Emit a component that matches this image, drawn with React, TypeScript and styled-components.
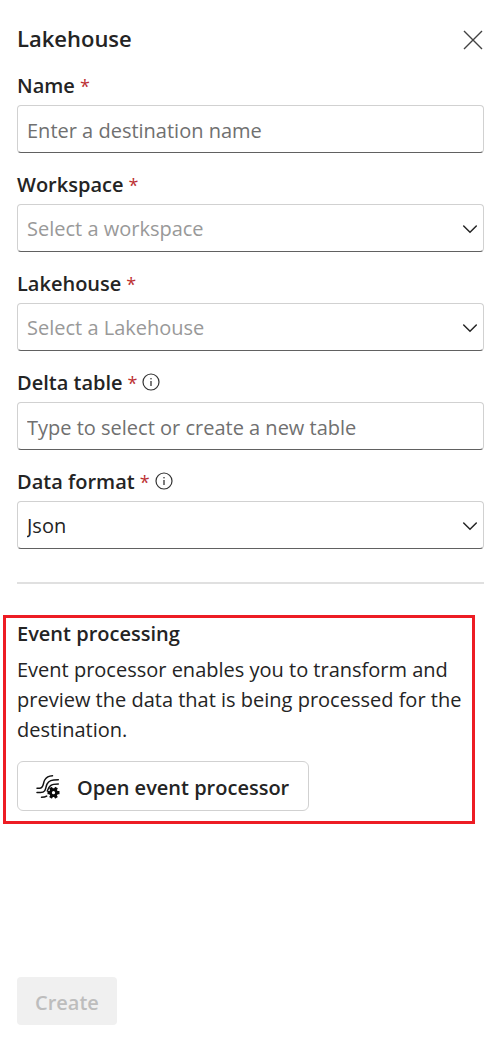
import React from "react";
import styled, { createGlobalStyle, css } from "styled-components";

const GlobalStyle = createGlobalStyle`
  *, *::before, *::after { box-sizing: border-box; }
  body {
    margin: 0;
    background: #ffffff;
    color: #242424;
    font-family: "Open Sans", "Noto Sans", sans-serif;
    font-size: 20px;
    line-height: 30px;
  }
  button, input, select { font: inherit; color: inherit; }
`;

const Panel = styled.form`
  display: flex;
  flex-direction: column;
  min-height: 100vh;
  padding: 24px 16px 20px 17px;
`;

const Header = styled.header`
  display: flex;
  align-items: flex-end;
  justify-content: space-between;
  height: 30px;
  margin-bottom: 17px;
`;

const Title = styled.h1`
  margin: 0;
  padding-bottom: 1px;
  font-size: 22px;
  font-weight: 600;
`;

const IconButton = styled.button`
  display: flex;
  padding: 0 0 3px;
  border: 0;
  background: none;
  cursor: pointer;
`;

const Fields = styled.div`
  display: flex;
  flex-direction: column;
  gap: 17px;
`;

const Field = styled.div`
  display: flex;
  flex-direction: column;
  gap: 4px;
`;

const LabelRow = styled.div`
  display: flex;
  align-items: center;
  gap: 5px;
  height: 30px;
`;

const Label = styled.label`
  font-weight: 600;
`;

const Required = styled.span`
  margin-left: 5px;
  color: #bc2f32;
  font-size: 18px;
  font-weight: 400;
  line-height: 20px;
`;

const controlStyle = css`
  width: 100%;
  height: 48px;
  padding: 2px 9px 0;
  border: 1px solid #d1d1d1;
  border-bottom-color: #616161;
  border-radius: 4px;
  background: #ffffff;
`;

const TextInput = styled.input`
  ${controlStyle}
  &::placeholder { color: #707070; opacity: 1; }
`;

const SelectBox = styled.div`
  position: relative;
`;

const Select = styled.select<{ $empty: boolean }>`
  ${controlStyle}
  display: block;
  padding-right: 36px;
  appearance: none;
  color: ${(p) => (p.$empty ? "#999999" : "#242424")};
`;

const Chevron = styled.svg`
  position: absolute;
  right: 6px;
  top: 16px;
  pointer-events: none;
`;

const Divider = styled.hr`
  width: 100%;
  height: 2px;
  margin: 33px 0 31px;
  border: 0;
  background: #e0e0e0;
`;

const Highlight = styled.section`
  margin: 0 9px 40px -14px;
  padding: 1px 3px 10px 11px;
  border: 3px solid #ed1c24;
`;

const SectionTitle = styled.h2`
  margin: 0 0 6px;
  font-size: 20px;
  font-weight: 600;
`;

const Description = styled.p`
  margin: 0 0 16px;
`;

const OutlineButton = styled.button`
  display: flex;
  align-items: center;
  gap: 16px;
  height: 50px;
  padding: 3px 19px 0 17px;
  border: 1px solid #d1d1d1;
  border-radius: 6px;
  background: #ffffff;
  font-weight: 600;
  cursor: pointer;
`;

const CreateButton = styled.button`
  align-self: flex-start;
  height: 48px;
  margin-top: auto;
  padding: 3px 18px 0;
  border: 0;
  border-radius: 4px;
  background: #f0f0f0;
  font-weight: 600;

  &:disabled { color: #bdbdbd; }
`;

const CloseIcon = () => (
  <svg width="22" height="22" viewBox="0 0 22 22" fill="none" stroke="#424242" strokeWidth="1.4" aria-hidden="true">
    <path d="M2 2 20 20M20 2 2 20" />
  </svg>
);

const InfoIcon = () => (
  <svg width="18" height="18" viewBox="0 0 18 18" fill="none" stroke="#333333" aria-hidden="true">
    <circle cx="9" cy="9" r="8" strokeWidth="1.2" />
    <path d="M9 8v5" strokeWidth="1.3" />
    <circle cx="9" cy="5.7" r="0.8" fill="#333333" stroke="none" />
  </svg>
);

const ProcessorIcon = () => (
  <svg width="26" height="26" viewBox="0 0 26 26" fill="none" aria-hidden="true">
    <g stroke="#111111" strokeWidth="1.5" strokeLinecap="round">
      <path d="M2 13.300h2.500c4.500 0 3.300-5 5.200-8.300C11.500 1.900 13.500 1 17.500.8" />
      <path d="M2 17.500h3.500c6 0 4.800-5 6.500-8.400 1.800-3.500 4.500-4.300 11.300-4.300" />
      <path d="M6.500 22.300c2.300 0 3.800-.3 5.200-1.200" />
      <path d="M12.300 16c1.800-5 3.200-7 11-7" />
    </g>
    <g fill="#0a0a0a">
      <circle cx="18.500" cy="17.700" r="4.400" />
      {[0, 60, 120].map((angle) => (
        <rect key={angle} x="12.500" y="16.100" width="12" height="3.200" rx="0.5" transform={`rotate(${angle} 18.500 17.700)`} />
      ))}
    </g>
    <circle cx="18.500" cy="17.700" r="1.600" fill="#ffffff" />
  </svg>
);

type FieldProps = {
  id: string;
  label: string;
  info?: string;
  children: React.ReactNode;
};

const FormField = ({ id, label, info, children }: FieldProps) => (
  <Field>
    <LabelRow>
      <Label htmlFor={id}>
        {label}
        <Required>*</Required>
      </Label>
      {info && (
        <IconButton type="button" aria-label={info}>
          <InfoIcon />
        </IconButton>
      )}
    </LabelRow>
    {children}
  </Field>
);

type DropdownProps = { id: string; text: string; empty?: boolean };

const Dropdown = ({ id, text, empty = false }: DropdownProps) => (
  <SelectBox>
    <Select id={id} $empty={empty} defaultValue={empty ? "" : text}>
      <option value={empty ? "" : text}>{text}</option>
    </Select>
    <Chevron width="16" height="16" viewBox="0 0 16 16" fill="none" stroke="#242424" strokeWidth="1.5" strokeLinecap="round" aria-hidden="true">
      <path d="M1.700 6 8 12.200 14.300 6" />
    </Chevron>
  </SelectBox>
);

export default function App() {
  return (
    <>
      <GlobalStyle />
      <Panel onSubmit={(e) => e.preventDefault()}>
        <Header>
          <Title>Lakehouse</Title>
          <IconButton type="button" aria-label="Close">
            <CloseIcon />
          </IconButton>
        </Header>
        <Fields>
          <FormField id="name" label="Name">
            <TextInput id="name" placeholder="Enter a destination name" />
          </FormField>
          <FormField id="workspace" label="Workspace">
            <Dropdown id="workspace" text="Select a workspace" empty />
          </FormField>
          <FormField id="lakehouse" label="Lakehouse">
            <Dropdown id="lakehouse" text="Select a Lakehouse" empty />
          </FormField>
          <FormField id="table" label="Delta table" info="About the delta table">
            <TextInput id="table" placeholder="Type to select or create a new table" />
          </FormField>
          <FormField id="format" label="Data format" info="About the data format">
            <Dropdown id="format" text="Json" />
          </FormField>
        </Fields>
        <Divider />
        <Highlight>
          <SectionTitle>Event processing</SectionTitle>
          <Description>
            Event processor enables you to transform and preview the data that is being processed for the destination.
          </Description>
          <OutlineButton type="button">
            <ProcessorIcon />
            Open event processor
          </OutlineButton>
        </Highlight>
        <CreateButton type="submit" disabled>
          Create
        </CreateButton>
      </Panel>
    </>
  );
}
